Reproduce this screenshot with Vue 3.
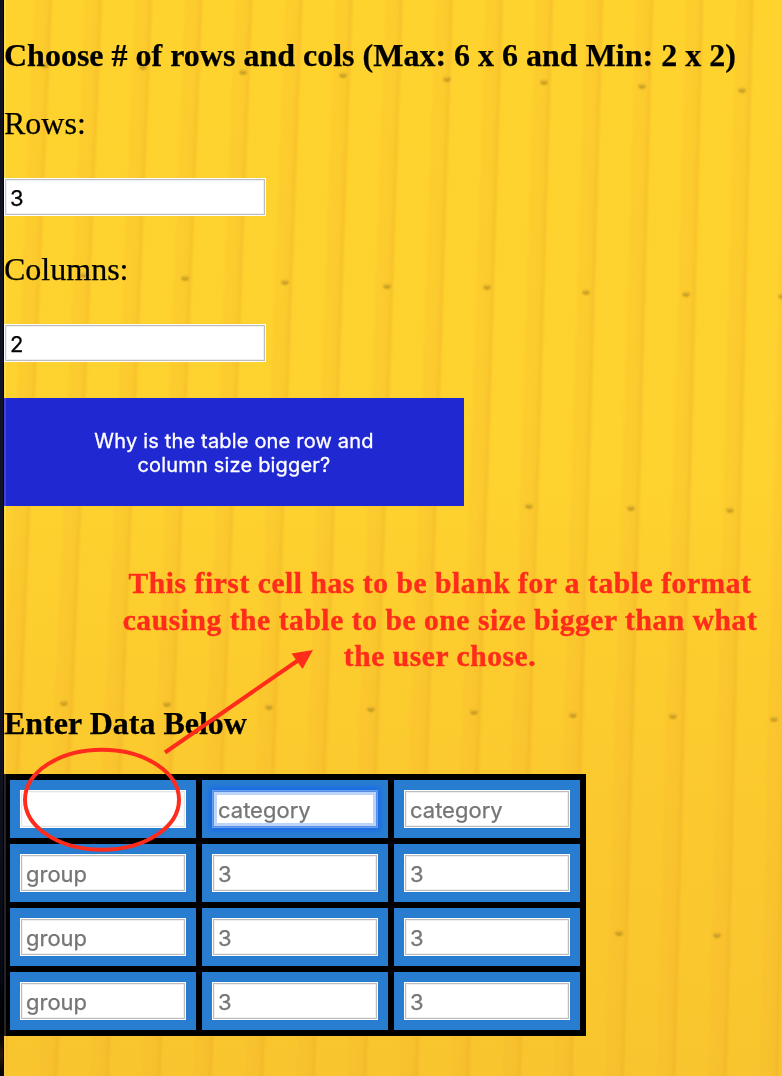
<script setup>
const ribs = Array.from({ length: 18 }, (_, i) => {
  const t = 1.5 + i * 50.1
  const b = -46 + i * 51.5
  return {
    id: i,
    band: `M${t - 17} 0H${t}L${b} 1076H${b - 18}Z`,
    core: `M${t - 8} 0H${t}L${b} 1076H${b - 9}Z`,
    edge: `M${t - 1} 0L${b - 1} 1076`
  }
})

const screws = [
  [45, 65], [143, 67], [243, 72], [343, 75], [447, 79], [544, 82], [642, 86], [742, 90],
  [84, 275], [185, 278], [285, 282], [387, 286], [487, 287], [586, 292], [686, 294], [782, 296],
  [529, 506], [631, 508], [730, 510],
  [64, 703], [167, 704], [269, 707], [371, 709], [474, 712], [573, 715], [673, 716], [774, 719],
  [619, 933], [717, 935]
]

const cells = [
  { id: 1, hint: '', kind: 'blank' },
  { id: 2, hint: 'category', kind: 'focused' },
  { id: 3, hint: 'category' },
  { id: 4, hint: 'group' }, { id: 5, hint: '3' }, { id: 6, hint: '3' },
  { id: 7, hint: 'group' }, { id: 8, hint: '3' }, { id: 9, hint: '3' },
  { id: 10, hint: 'group' }, { id: 11, hint: '3' }, { id: 12, hint: '3' }
]
</script>

<template>
  <main class="page">
    <svg class="wall" width="782" height="1076" viewBox="0 0 782 1076" aria-hidden="true">
      <defs>
        <filter id="soft" x="-5%" y="-5%" width="110%" height="110%"><feGaussianBlur stdDeviation="1.5 0" /></filter>
        <filter id="dot" x="-50%" y="-50%" width="200%" height="200%"><feGaussianBlur stdDeviation=".8" /></filter>
      </defs>
      <g filter="url(#soft)">
        <g v-for="r in ribs" :key="r.id">
          <path :d="r.band" fill="#f0a828" opacity=".15" />
          <path :d="r.core" fill="#f0a828" opacity=".06" />
          <path :d="r.edge" stroke="#dc9426" stroke-width="2.5" opacity=".22" />
        </g>
      </g>
      <g filter="url(#dot)">
        <g v-for="(s, i) in screws" :key="i">
          <ellipse :cx="s[0]" :cy="s[1]" rx="3.4" ry="2.2" fill="#a77b12" opacity=".35" />
          <path :d="`M${s[0] - 3} ${s[1]}q3 3.600 6 0`" fill="none" stroke="#70520c" stroke-width="1.3" opacity=".55" />
          <ellipse :cx="s[0]" :cy="s[1] - 1" rx="1.6" ry="1" fill="#e0b744" opacity=".8" />
        </g>
      </g>
    </svg>

    <section class="content">
      <h4 class="title">Choose # of rows and cols (Max: 6 x 6 and Min: 2 x 2)</h4>
      <p class="label">Rows:</p>
      <div class="field size">3</div>
      <p class="label">Columns:</p>
      <div class="field size">2</div>
      <button class="why">Why is the table one row and<br>column size bigger?</button>
      <p class="note">
        This first cell has to be blank for a table format<br>
        causing the table to be one size bigger than what<br>
        the user chose.
      </p>
      <h4 class="subtitle">Enter Data Below</h4>
      <div class="grid">
        <div v-for="c in cells" :key="c.id" class="cell">
          <div class="field hint" :class="c.kind">{{ c.hint }}</div>
        </div>
      </div>
    </section>

    <div class="left-edge"></div>
    <svg class="marks" width="782" height="1076" viewBox="0 0 782 1076" aria-hidden="true">
      <ellipse cx="102" cy="799.8" rx="77" ry="50" fill="none" stroke="#ff2c1c" stroke-width="4" />
      <path d="M165 752.5L300 659" stroke="#ff2c1c" stroke-width="4" />
      <path d="M313 650L291.500 653.500L302.500 669Z" fill="#ff2c1c" />
    </svg>
  </main>
</template>

<style>
body { margin: 0; overflow: hidden; }
</style>

<style scoped>
.page {
  position: relative;
  width: 782px;
  height: 1076px;
  overflow: hidden;
  background: linear-gradient(#ffd32e 0, #fed22f 45%, #fccb2e 65%, #f9c52e 100%);
  color: #000;
  font-family: "Liberation Serif", serif;
}
.wall, .marks { position: absolute; left: 0; top: 0; }
.content {
  position: relative;
  display: flex;
  flex-direction: column;
  align-items: flex-start;
  padding: 37px 0 0 4px;
}
.title, .subtitle, .label { margin: 0; font-size: 32px; line-height: 36px; white-space: nowrap; -webkit-text-stroke: .25px currentColor; }
.label { margin-top: 32px; }
.field {
  box-sizing: border-box;
  height: 38px;
  background: #fff;
  border: 1px solid #fff;
  box-shadow: inset 0 0 0 1px #bdbdbd, inset 0 0 0 2px #efefef;
  padding-left: 5px;
  font: 22px/38px Inter, sans-serif;
  -webkit-text-stroke: .25px currentColor;
}
.size { width: 262px; margin-top: 37px; }
.size + .label { margin-top: 35px; }
.why {
  width: 460px;
  height: 108px;
  margin: 36px 0 0;
  padding: 2px 0 0;
  border: 0;
  border-radius: 0;
  background: #2028d2;
  color: #fff;
  font: 20px/24px Inter, sans-serif;
  letter-spacing: .18px;
  -webkit-text-stroke: .3px currentColor;
}
.note {
  width: 640px;
  margin: 59px 0 0 116px;
  color: #ff2c1c;
  font-size: 29.5px;
  line-height: 36.6px;
  font-weight: bold;
  text-align: center;
  white-space: nowrap;
  letter-spacing: .57px;
  -webkit-text-stroke: .4px currentColor;
}
.subtitle { margin-top: 30px; }
.grid {
  display: grid;
  grid-template-columns: repeat(3, 186px);
  grid-auto-rows: 58px;
  gap: 6px;
  padding: 6px;
  margin-top: 33px;
  background: #000;
}
.cell { padding: 10px; background: #297dd1; }
.hint { color: #757575; }
.blank { box-shadow: inset 0 0 0 1px #e4e4e4, inset 0 0 0 2px #f7f7f7; }
.focused {
  border-color: #6a9fea;
  box-shadow: inset 0 0 0 1px #5590e4, inset 0 0 0 4px #bcd4fa, 0 0 6px 2px #1567ed;
}
.left-edge {
  position: absolute;
  inset: 0 auto 0 0;
  width: 3px;
  background: linear-gradient(#12121f, #101425 45%, #121220 70%, #050914 90%, #000 96%, #2a1808 98%, #000);
  border-right: 1px solid #000;
  box-shadow: 2px 0 0 rgba(255, 255, 255, .14);
}
</style>
